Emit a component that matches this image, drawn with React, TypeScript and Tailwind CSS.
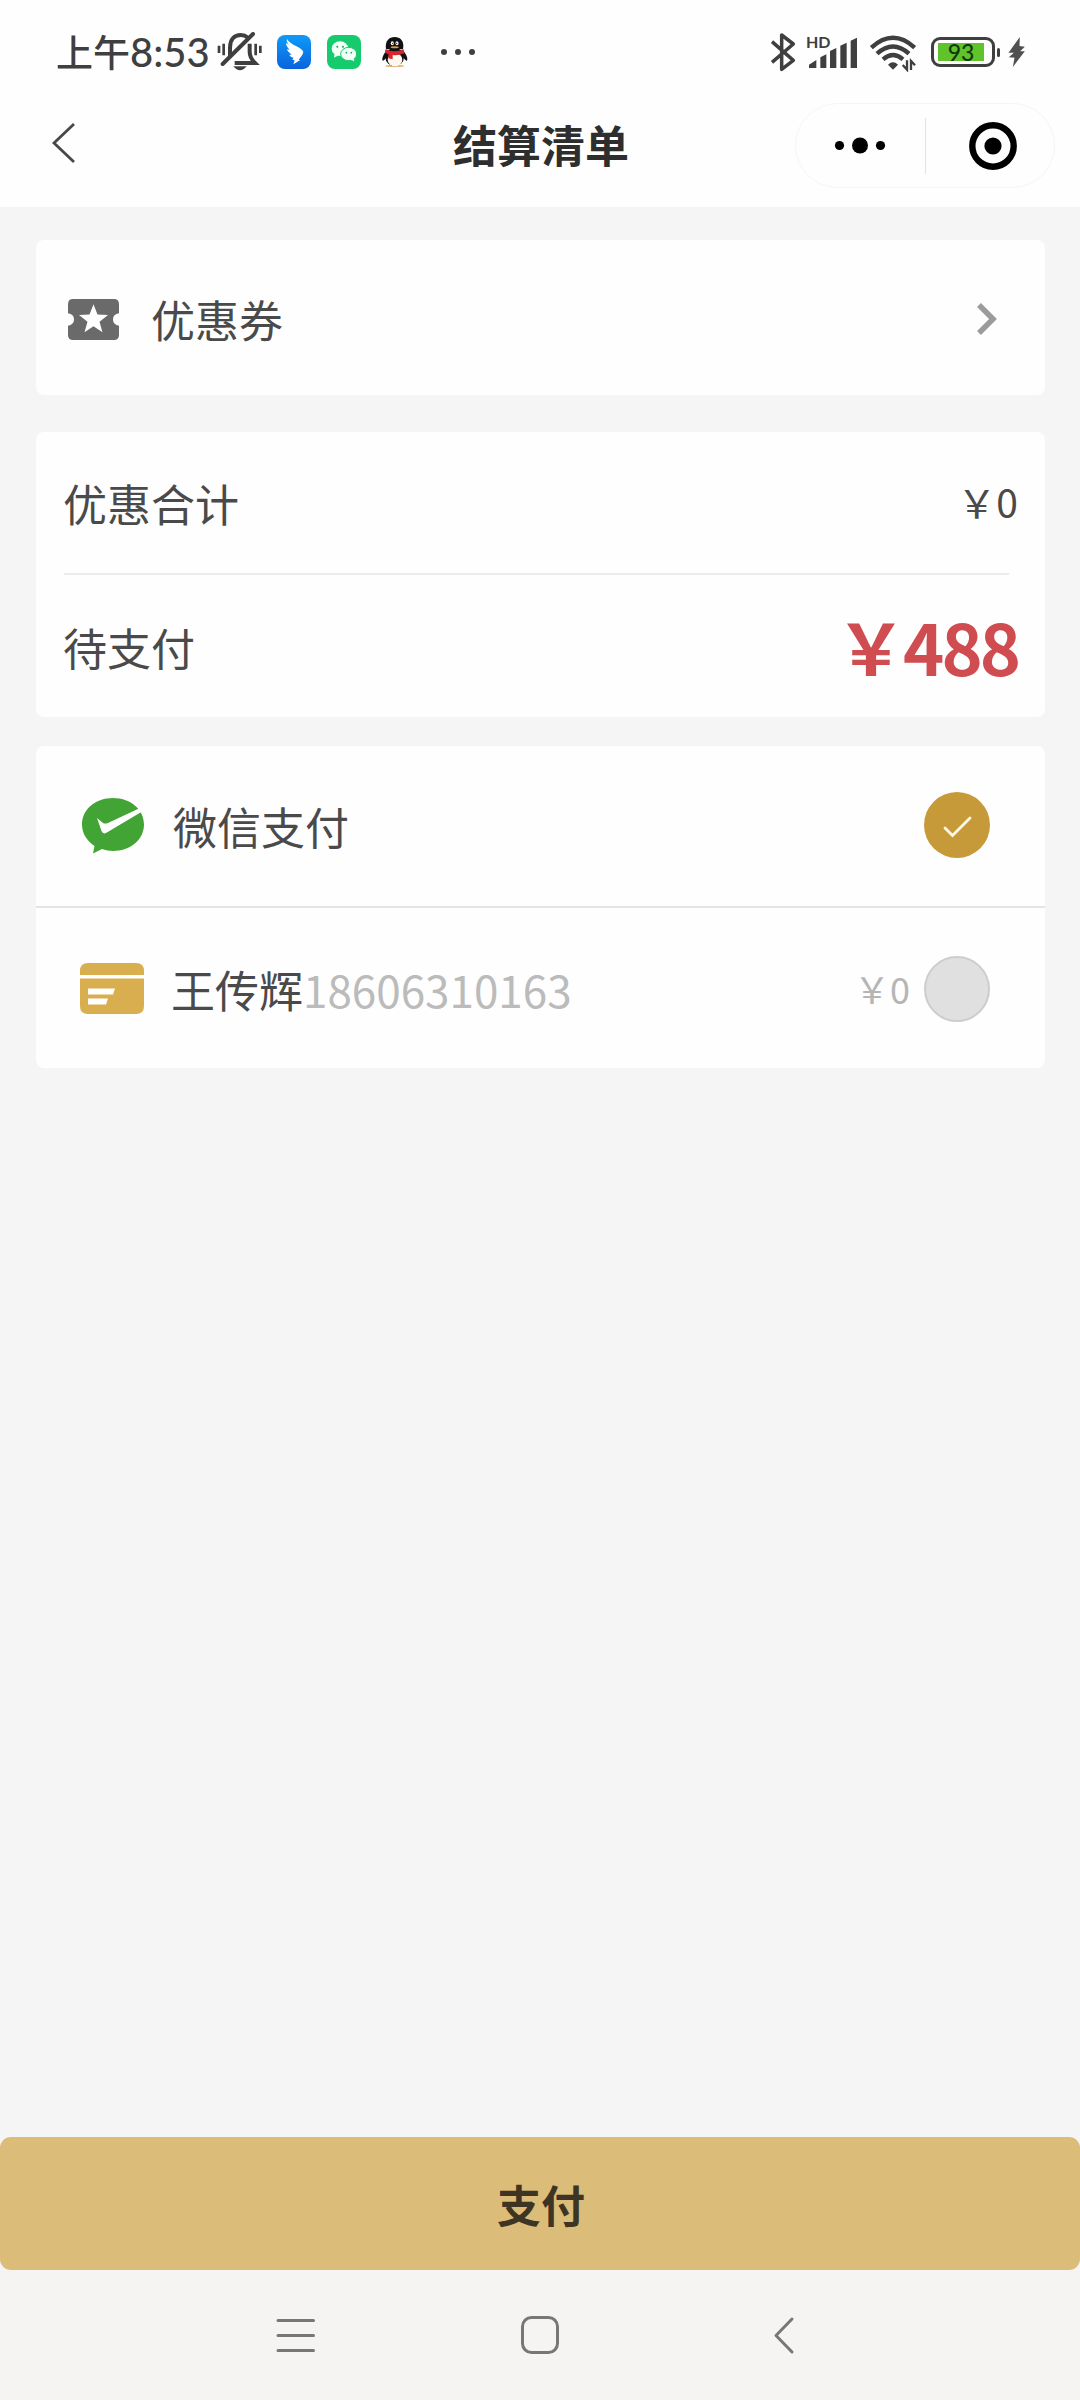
import React from 'react';

const ink = '#3f3f3f';

function MutedBell() {
  return (
    <svg className="ml-[8px] h-[40px] w-[46px] shrink-0" viewBox="529 69 138 120" fill="none" stroke={ink} strokeWidth="12">
      <path d="M568 141V116C568 90 582 78 600 78C609 78 616 81 622 86" />
      <path d="M546 165L637 75" strokeLinecap="round" />
      <path d="M627 104V128C627 144 634 153 643 162H582" />
      <path d="M535 110V132M549 104V139M645 104V139M659 110V132" strokeWidth="8" />
      <path d="M578 172H618Q598 196 578 172Z" fill={ink} stroke="none" />
    </svg>
  );
}

function DingTalk() {
  return (
    <svg className="ml-[14px] h-[34px] w-[34px] shrink-0" viewBox="711 75 102 102">
      <defs>
        <linearGradient id="ding" x1="0" y1="0" x2="0" y2="1">
          <stop offset="0" stopColor="#0f9bf8" />
          <stop offset="1" stopColor="#0a63dc" />
        </linearGradient>
      </defs>
      <rect x="711" y="75" width="102" height="102" rx="24" fill="url(#ding)" />
      <path fill="#fff" d="M741 87C746 97 758 103 768 108C778 113 788 119 790 126C788 136 781 143 776 149L780 151L760 163L764 151L757 149L761 143C755 142 750 139 748 134L755 134C748 129 743 124 741 118L749 119C742 112 738 106 738 99L747 104C741 98 739 93 741 87Z" />
    </svg>
  );
}

function WeChat() {
  return (
    <svg className="ml-[16px] h-[34px] w-[34px] shrink-0" viewBox="861 75 102 102">
      <rect x="861" y="75" width="102" height="102" rx="24" fill="#16ca6e" />
      <ellipse cx="900" cy="116" rx="25" ry="22" fill="#f4fff8" />
      <path d="M884 130L882 143L896 136Z" fill="#f4fff8" />
      <ellipse cx="926" cy="132" rx="24" ry="20" fill="#f4fff8" stroke="#16ca6e" strokeWidth="3" />
      <path d="M932 149L943 154L941 143Z" fill="#f4fff8" />
      <circle cx="892" cy="110" r="3" fill="#16a65c" />
      <circle cx="909" cy="110" r="3" fill="#16a65c" />
      <circle cx="919" cy="128" r="2.6" fill="#16a65c" />
      <circle cx="934" cy="128" r="2.6" fill="#16a65c" />
    </svg>
  );
}

function Penguin() {
  return (
    <svg className="ml-[20px] h-[32px] w-[28px] shrink-0" viewBox="1021 78 84 96">
      <ellipse cx="1048" cy="168" rx="14" ry="3" fill="#e8b97a" />
      <ellipse cx="1076" cy="168" rx="14" ry="3" fill="#e8b97a" />
      <path d="M1036 122C1028 134 1023 145 1026 152C1030 153 1034 147 1037 142ZM1088 122C1098 134 1102 145 1099 152C1095 153 1091 147 1087 142Z" fill="#111" />
      <ellipse cx="1062" cy="141" rx="28" ry="28" fill="#111" />
      <ellipse cx="1063" cy="149" rx="22" ry="20" fill="#fff8ee" />
      <path d="M1036 118C1032 92 1046 81 1062 81S1092 92 1087 118Z" fill="#111" />
      <ellipse cx="1055" cy="100" rx="4.500" ry="6" fill="#fff" />
      <ellipse cx="1069" cy="100" rx="4.500" ry="6" fill="#fff" />
      <circle cx="1056" cy="100" r="2" fill="#111" />
      <circle cx="1068" cy="100" r="2" fill="#111" />
      <ellipse cx="1062" cy="112" rx="12" ry="3" fill="#e8953c" />
      <path d="M1034 118Q1062 130 1089 118L1091 129Q1072 138 1056 135V148L1043 145V132L1033 128Z" fill="#d8262f" />
    </svg>
  );
}

function Bluetooth() {
  return (
    <svg className="h-[40px] w-[26px] shrink-0" viewBox="90 65 78 120" fill="none" stroke={ink} strokeWidth="10.500">
      <path d="M96 94L160 150L125 177V74L160 101L96 156" strokeLinejoin="round" />
    </svg>
  );
}

function Signal() {
  return (
    <div className="relative ml-[10px] h-[40px] w-[52px] shrink-0">
      <span className="absolute left-0 top-0 font-['Lato','Noto_Sans_CJK_SC',sans-serif] text-[16px] font-bold leading-[20px] text-[#3f3f3f]">HD</span>
      <svg className="h-[40px] w-[52px]" viewBox="198 65 156 120" fill={ink}>
        <path d="M207 173V163L229 149V173ZM241 173V141L259 132V173ZM270 173V122L289 113V173ZM301 173V106L320 97V173ZM332 173V91L351 82V173Z" />
      </svg>
    </div>
  );
}

function Wifi() {
  return (
    <svg className="ml-[11px] h-[40px] w-[48px] shrink-0" viewBox="387 66 144 120" fill="none" stroke={ink} strokeWidth="13">
      <path d="M394 113Q459 54 524 113M411 131Q459 88 507 131M429 148Q459 122 489 148" />
      <path d="M444 164Q459 150 474 164L459 179Z" fill={ink} stroke="none" />
      <path d="M501 151V179L488 165M513 180V153L525 166" strokeWidth="7" />
    </svg>
  );
}

function Battery() {
  return (
    <div className="ml-[14px] flex items-center">
      <div className="flex h-[30px] w-[64px] items-center rounded-[9px] border-[3px] border-[#3f3f3f] pl-[4px]">
        <div className="flex h-[18px] w-[46px] items-center justify-center bg-[#60c32c] font-['Lato','Noto_Sans_CJK_SC',sans-serif] text-[23px] font-medium leading-none text-[#12380a]">
          93
        </div>
      </div>
      <div className="ml-[2px] h-[9px] w-[3px] rounded-sm bg-[#3f3f3f]" />
      <svg className="ml-[8px] h-[30px] w-[17px]" viewBox="803 81 50 90" fill="#505050">
        <path d="M838 81L804 128H820L805 142L822 143L817 171L853 124H839L853 110L837 108Z" />
      </svg>
    </div>
  );
}

function StatusBar() {
  return (
    <div className="flex h-[104px] items-center pl-[56px] pr-[55px]">
      <div className="flex w-[153px] items-center whitespace-nowrap text-[37px] font-medium leading-[40px] text-[#3f3f3f]">
        <span className="-mt-[3px]">上午</span>
        <span className="font-['Lato','Noto_Sans_CJK_SC',sans-serif] text-[40px]">8:53</span>
      </div>
      <MutedBell />
      <DingTalk />
      <WeChat />
      <Penguin />
      <svg className="ml-[31px] h-[8px] w-[36px]" viewBox="0 0 36 8" fill={ink}>
        <circle cx="4" cy="4" r="3" />
        <circle cx="18" cy="4" r="3" />
        <circle cx="32" cy="4" r="3" />
      </svg>
      <div className="ml-auto flex items-center">
        <Bluetooth />
        <Signal />
        <Wifi />
        <Battery />
      </div>
    </div>
  );
}

function Header() {
  return (
    <header className="grid h-[103px] grid-cols-[1fr_auto_1fr] items-start">
      <svg className="ml-[50px] mt-[17px] h-[44px] w-[26px]" viewBox="0 0 26 44" fill="none" stroke="#484848" strokeWidth="2.8">
        <path d="M24 3L4 22L24 41" />
      </svg>
      <h1 className="ml-[2px] mt-[10px] text-[44px] font-bold leading-[60px] text-[#2e2e2e]">结算清单</h1>
      <div className="-mt-[1px] mr-[25px] flex h-[85px] w-[260px] items-center justify-self-end rounded-full border border-[#f5f5f5]">
        <svg className="ml-[38px] h-[20px] w-[52px]" viewBox="0 0 52 20">
          <circle cx="5.5" cy="9.500" r="4.6" />
          <circle cx="26" cy="9.500" r="8" />
          <circle cx="46.500" cy="9.500" r="4.6" />
        </svg>
        <div className="ml-[39px] h-[56px] w-px bg-[#e2e2e2]" />
        <svg className="ml-[43px] h-[48px] w-[48px]" viewBox="0 0 48 48">
          <circle cx="24" cy="24" r="20.700" fill="none" stroke="#000" strokeWidth="6.400" />
          <circle cx="24" cy="24" r="8.600" />
        </svg>
      </div>
    </header>
  );
}

function CouponCard() {
  return (
    <section className="mt-[33px] flex h-[155px] items-center rounded-[8px] bg-[#fefefe] pl-[32px] pr-[48px]">
      <svg className="mt-[3px] h-[41px] w-[51px]" viewBox="0 0 51 40" preserveAspectRatio="none">
        <path fill="#6a6a6a" d="M5 0H46Q51 0 51 5V14Q45 15 45 20T51 26V35Q51 40 46 40H5Q0 40 0 35V26Q6 25 6 20T0 14V5Q0 0 5 0Z" />
        <path fill="#fff" d="M25.500 5L29.500 15.200L40 15.500L31.500 22.200L34.500 32.500L25.500 26.500L16.500 32.500L19.500 22.200L11 15.500L21.500 15.200Z" />
      </svg>
      <span className="ml-[32px] mt-[3px] text-[44px] leading-[60px] text-[#4a4a4a]">优惠券</span>
      <svg className="ml-auto mt-[2px] h-[32px] w-[21px]" viewBox="0 0 21 32" fill="none" stroke="#9b9b9b" strokeWidth="5.500">
        <path d="M3 2L17 16L3 30" />
      </svg>
    </section>
  );
}

function TotalsCard() {
  return (
    <section className="mt-[37px] h-[285px] rounded-[8px] bg-[#fefefe] pl-[27px] pr-[27px]">
      <div className="flex h-[141px] items-center justify-between text-[#4a4a4a]">
        <span className="text-[44px] leading-[60px]">优惠合计</span>
        <span className="-mt-[3px] text-[39px] leading-[60px]">￥0</span>
      </div>
      <div className="ml-px mr-[9px] h-[2px] bg-[#ececec]" />
      <div className="flex h-[142px] items-center justify-between">
        <span className="mt-px text-[44px] leading-[60px] text-[#4a4a4a]">待支付</span>
        <span className="-mt-[1px] text-[70px] font-bold leading-[90px] tracking-[-3px] text-[#cf4c51]">￥488</span>
      </div>
    </section>
  );
}

function PaymentCard() {
  return (
    <section className="mt-[29px] h-[322px] rounded-[8px] bg-[#fefefe]">
      <div className="flex h-[160px] items-center pl-[46px] pr-[55px]">
        <svg className="h-[56px] w-[62px]" viewBox="0 0 62 56">
          <path fill="#43a436" d="M31 0C48 0 62 11 62 26.500S48 53 31 53Q25 53 20 51L11 55.500L12.500 48C5 43 0 35.500 0 26.500C0 11 14 0 31 0Z" />
          <path fill="#fff" d="M15 20L21 25Q23 26 26 25L58 10L61 13L24 35Q21 36.500 19.500 33Z" />
        </svg>
        <span className="ml-[29px] mt-[-1px] text-[44px] leading-[60px] text-[#4a4a4a]">微信支付</span>
        <span className="ml-auto mt-[-2px] flex h-[66px] w-[66px] items-center justify-center rounded-full bg-[#c69a38]">
          <svg className="mt-[3px] h-[24px] w-[32px]" viewBox="0 0 32 24" fill="none" stroke="#fff9e4" strokeWidth="2.800" strokeLinecap="round">
            <path d="M4 13L11.500 20.500L29 3" />
          </svg>
        </span>
      </div>
      <div className="h-[2px] bg-[#e4e4e4]" />
      <div className="flex h-[160px] items-center pl-[44px] pr-[55px]">
        <svg className="h-[51px] w-[64px]" viewBox="0 0 64 51" fill="#d8ae4e">
          <path d="M8 0H56Q64 0 64 8V12H0V8Q0 0 8 0ZM0 15.500H64V43Q64 51 56 51H8Q0 51 0 43Z" />
          <path fill="#fff" d="M8 25.500H35L33 31.500H8ZM8 35.500H28L26 41.500H8Z" />
        </svg>
        <span className="ml-[27px] mt-[2px] text-[44px] leading-[60px] text-[#4a4a4a]">
          王传辉<span className="text-[#bbbbbb]">18606310163</span>
        </span>
        <span className="ml-auto mr-[14px] text-[36px] leading-[50px] text-[#b5b5b5]">￥0</span>
        <span className="mt-[2px] h-[66px] w-[66px] rounded-full border-2 border-[#cdcdcd] bg-[#e0e0e0]" />
      </div>
    </section>
  );
}

function NavigationBar() {
  return (
    <nav className="flex h-[130px] items-start bg-[#f5f4f3] pt-[44px]">
      <svg className="ml-[276px] h-[42px] w-[40px]" viewBox="0 0 40 42" fill="none" stroke="#777" strokeWidth="3" strokeLinecap="round">
        <path d="M2 6.500H37.500M2 21.500H37.500M2 36.500H37.500" />
      </svg>
      <svg className="ml-[203px] h-[42px] w-[42px]" viewBox="0 0 42 42" fill="none" stroke="#777" strokeWidth="3">
        <rect x="3.500" y="3.500" width="35" height="35" rx="9" />
      </svg>
      <svg className="ml-[212px] h-[42px] w-[24px]" viewBox="0 0 24 42" fill="none" stroke="#777" strokeWidth="3" strokeLinecap="round" strokeLinejoin="round">
        <path d="M19 5L3 21.500L19 38" />
      </svg>
    </nav>
  );
}

export default function App() {
  return (
    <div className="flex h-[2400px] w-[1080px] flex-col bg-[#f5f5f5] font-['Noto_Sans_CJK_SC',sans-serif]">
      <div className="h-[207px] bg-[#fefefe]">
        <StatusBar />
        <Header />
      </div>
      <main className="flex-1 pl-[36px] pr-[35px]">
        <CouponCard />
        <TotalsCard />
        <PaymentCard />
      </main>
      <button className="flex h-[133px] items-center justify-center rounded-[11px] bg-[#dbbd79] pl-[2px] text-[44px] font-bold leading-[60px] text-[#3d3423]">
        支付
      </button>
      <NavigationBar />
    </div>
  );
}
